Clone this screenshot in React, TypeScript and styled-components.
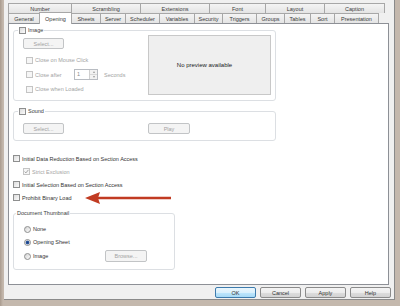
import React from 'react';
import styled, { createGlobalStyle } from 'styled-components';

const GlobalStyle = createGlobalStyle`
	html, body {
		margin: 0;
		padding: 0;
		background: #b3a699;
	}
	body {
		font-family: 'Liberation Sans', Arial, sans-serif;
		font-size: 5.5px;
		color: #303030;
	}
`;

const Frame = styled.div`
	width: 400px;
	height: 306px;
	box-sizing: border-box;
	padding: 0 5px 6px 4px;
	display: flex;
	background: linear-gradient(90deg, #a99b8e 0, #c4b8ad 3px, #c4b8ad 100%);
`;

const Dialog = styled.div`
	flex: 1;
	display: flex;
	flex-direction: column;
	background: #f0f0f0;
	padding: 3px 5px 0 4px;
	border-right: 1px solid #8a8a8a;
	border-bottom: 1px solid #8a8a8a;
`;

const TabRow = styled.div`
	display: flex;
	height: 10px;
	position: relative;
`;

const Tab = styled.div<{ $w: number; $active?: boolean }>`
	width: ${(p) => p.$w}px;
	box-sizing: border-box;
	display: flex;
	align-items: center;
	justify-content: center;
	border: 1px solid #a7a7a7;
	border-bottom: none;
	margin-right: -1px;
	background: ${(p) => (p.$active ? '#fff' : 'linear-gradient(#f4f4f4, #e4e4e4)')};
	color: #3a3a3a;
	font-size: 5.5px;
	white-space: nowrap;
	${(p) =>
		p.$active &&
		`
		height: 12px;
		margin-top: -1px;
		margin-bottom: -1px;
		z-index: 2;
	`}
`;

const Panel = styled.div`
	height: 262px;
	box-sizing: border-box;
	background: #fff;
	border: 1px solid #8d9096;
	padding: 2px 0 0 4px;
	display: flex;
	flex-direction: column;
	align-items: flex-start;
`;

const Group = styled.fieldset<{ $w: number; $top?: number }>`
	width: ${(p) => p.$w}px;
	box-sizing: border-box;
	margin: ${(p) => p.$top ?? 0}px 0 0 0;
	padding: 0;
	border: 1px solid #dcdfe3;
	border-radius: 3px;
	min-width: 0;
`;

const Legend = styled.legend<{ $indent?: number }>`
	display: flex;
	align-items: center;
	gap: 2px;
	height: 8px;
	line-height: 8px;
	padding: 0 1px;
	margin-left: ${(p) => p.$indent ?? 4}px;
	color: #3a3a3a;
`;

const ImageBody = styled.div`
	display: flex;
	justify-content: space-between;
	padding: 0 4px 5px 9px;
	margin-top: 1px;
`;

const LeftCol = styled.div`
	display: flex;
	flex-direction: column;
	align-items: flex-start;
	padding-top: 3px;
`;

const Button = styled.div<{ $w: number; $h?: number; $disabled?: boolean }>`
	width: ${(p) => p.$w}px;
	height: ${(p) => p.$h ?? 11}px;
	box-sizing: border-box;
	display: flex;
	align-items: center;
	justify-content: center;
	border: 1px solid ${(p) => (p.$disabled ? '#c2c4c6' : '#8b8b8b')};
	border-radius: 2px;
	background: ${(p) => (p.$disabled ? '#f4f4f4' : 'linear-gradient(#f4f4f4 0, #ececec 50%, #dddddd 51%, #d2d2d2 100%)')};
	color: ${(p) => (p.$disabled ? '#a3a3a3' : '#333')};
	font-size: 5.5px;
`;

const DefaultButton = styled(Button)`
	border-color: #3d7bad;
	background: linear-gradient(#eaf6fd 0, #d9f0fc 50%, #bee6fd 51%, #a7d9f5 100%);
`;

const Row = styled.div<{ $top?: number; $indent?: number; $h?: number; $disabled?: boolean }>`
	display: flex;
	align-items: center;
	gap: 2px;
	height: ${(p) => p.$h ?? 8}px;
	margin-top: ${(p) => p.$top ?? 0}px;
	margin-left: ${(p) => p.$indent ?? 0}px;
	color: ${(p) => (p.$disabled ? '#a3a3a3' : '#333')};
	white-space: nowrap;
`;

const Box = styled.span<{ $disabled?: boolean }>`
	width: 7px;
	height: 7px;
	box-sizing: border-box;
	flex: none;
	display: flex;
	align-items: center;
	justify-content: center;
	border: 1px solid ${(p) => (p.$disabled ? '#c4c4c4' : '#8e8f8f')};
	background: ${(p) => (p.$disabled ? '#f6f6f6' : 'linear-gradient(135deg, #dcdcdc, #fbfbfb)')};
`;

const Radio = styled.span<{ $on?: boolean }>`
	width: 7px;
	height: 7px;
	box-sizing: border-box;
	flex: none;
	border-radius: 50%;
	border: 1px solid #8e8f8f;
	background: ${(p) =>
		p.$on ? 'radial-gradient(circle, #1c3d7a 0, #2f5ea8 1.6px, #e8e8e8 2.2px)' : 'linear-gradient(135deg, #d4d4d4, #fbfbfb)'};
`;

const AfterLabel = styled.span`
	width: 37px;
`;

const Spinner = styled.div`
	width: 24px;
	height: 11px;
	box-sizing: border-box;
	border: 1px solid #b8bcc2;
	display: flex;
	margin-right: 4px;
	color: #8a8a8a;
`;

const SpinValue = styled.span`
	flex: 1;
	padding-left: 2px;
	line-height: 9px;
`;

const SpinArrows = styled.div`
	width: 7px;
	display: flex;
	flex-direction: column;
	border-left: 1px solid #d0d0d0;
	background: #f2f2f2;
`;

const SpinHalf = styled.div<{ $down?: boolean }>`
	flex: 1;
	display: flex;
	align-items: center;
	justify-content: center;
	border-top: ${(p) => (p.$down ? '1px solid #d8d8d8' : 'none')};
	&::after {
		content: '';
		border-left: 1.5px solid transparent;
		border-right: 1.5px solid transparent;
		${(p) => (p.$down ? 'border-top: 2px solid #9a9a9a;' : 'border-bottom: 2px solid #9a9a9a;')}
	}
`;

const Preview = styled.div`
	width: 123px;
	height: 60px;
	box-sizing: border-box;
	border: 1px solid #c8c8c8;
	background: #efefef;
	display: flex;
	align-items: center;
	justify-content: center;
	color: #1a1a1a;
	font-size: 6px;
	padding-right: 10px;
`;

const SoundBody = styled.div`
	display: grid;
	grid-template-columns: 125px auto;
	justify-content: start;
	padding: 8px 0 6px 9px;
`;

const ThumbBody = styled.div`
	display: flex;
	flex-direction: column;
	padding: 0 0 7px 10px;
`;

const ThumbImageRow = styled.div`
	display: grid;
	grid-template-columns: 81px auto;
	align-items: center;
	margin-top: 4px;
	height: 12px;
`;

const Arrow = styled.svg`
	margin-left: 11px;
	flex: none;
`;

const ButtonBar = styled.div`
	display: flex;
	justify-content: flex-end;
	gap: 4px;
	padding-top: 2px;
	margin-right: -2px;
`;

const row1: [string, number][] = [
	['Number', 64],
	['Scrambling', 70],
	['Extensions', 70],
	['Font', 57],
	['Layout', 60],
	['Caption', 61],
];

const row2: [string, number][] = [
	['General', 32],
	['Opening', 33],
	['Sheets', 30],
	['Server', 26],
	['Scheduler', 35],
	['Variables', 36],
	['Security', 29],
	['Triggers', 35],
	['Groups', 29],
	['Tables', 27],
	['Sort', 25],
	['Presentation', 45],
];

const Check = () => (
	<svg width="5" height="5" viewBox="0 0 5 5">
		<path d="M0.6 2.6 L1.9 3.9 L4.4 0.9" fill="none" stroke="#9a9a9a" strokeWidth="0.9" />
	</svg>
);

const App: React.FC = () => {
	return (
		<>
			<GlobalStyle />
			<Frame>
				<Dialog>
					<TabRow>
						{row1.map(([label, w]) => (
							<Tab key={label} $w={w}>
								{label}
							</Tab>
						))}
					</TabRow>
					<TabRow>
						{row2.map(([label, w]) => (
							<Tab key={label} $w={w} $active={label === 'Opening'}>
								{label}
							</Tab>
						))}
					</TabRow>
					<Panel>
						<Group $w={263}>
							<Legend>
								<Box />
								Image
							</Legend>
							<ImageBody>
								<LeftCol>
									<Button $w={41} $disabled>
										Select...
									</Button>
									<Row $top={7} $indent={3} $disabled>
										<Box $disabled />
										Close on Mouse Click
									</Row>
									<Row $top={5} $indent={3} $h={11} $disabled>
										<Box $disabled />
										<AfterLabel>Close after</AfterLabel>
										<Spinner>
											<SpinValue>1</SpinValue>
											<SpinArrows>
												<SpinHalf />
												<SpinHalf $down />
											</SpinArrows>
										</Spinner>
										Seconds
									</Row>
									<Row $top={5} $indent={3} $disabled>
										<Box $disabled />
										Close when Loaded
									</Row>
								</LeftCol>
								<Preview>No preview available</Preview>
							</ImageBody>
						</Group>

						<Group $w={263} $top={6}>
							<Legend>
								<Box />
								Sound
							</Legend>
							<SoundBody>
								<Button $w={41} $disabled>
									Select...
								</Button>
								<Button $w={42} $disabled>
									Play
								</Button>
							</SoundBody>
						</Group>

						<Row $top={11} $h={13}>
							<Box />
							Initial Data Reduction Based on Section Access
						</Row>
						<Row $indent={10} $h={13} $disabled>
							<Box $disabled>
								<Check />
							</Box>
							Strict Exclusion
						</Row>
						<Row $h={13}>
							<Box />
							Initial Selection Based on Section Access
						</Row>
						<Row $h={13}>
							<Box />
							Prohibit Binary Load
							<Arrow width="87" height="14" viewBox="0 0 87 14">
								<line x1="12" y1="7" x2="86" y2="7" stroke="#c13b22" strokeWidth="2.4" />
								<polygon points="0,7 15,1 13,7 15,13" fill="#c13b22" />
							</Arrow>
						</Row>

						<Group $w={162} $top={5}>
							<Legend $indent={2}>Document Thumbnail</Legend>
							<ThumbBody>
								<Row $top={8}>
									<Radio />
									None
								</Row>
								<Row $top={5}>
									<Radio $on />
									Opening Sheet
								</Row>
								<ThumbImageRow>
									<Row>
										<Radio />
										Image
									</Row>
									<Button $w={42} $h={12} $disabled>
										Browse...
									</Button>
								</ThumbImageRow>
							</ThumbBody>
						</Group>
					</Panel>
					<ButtonBar>
						<DefaultButton $w={41}>OK</DefaultButton>
						<Button $w={41}>Cancel</Button>
						<Button $w={41}>Apply</Button>
						<Button $w={41}>Help</Button>
					</ButtonBar>
				</Dialog>
			</Frame>
		</>
	);
};

export default App;
